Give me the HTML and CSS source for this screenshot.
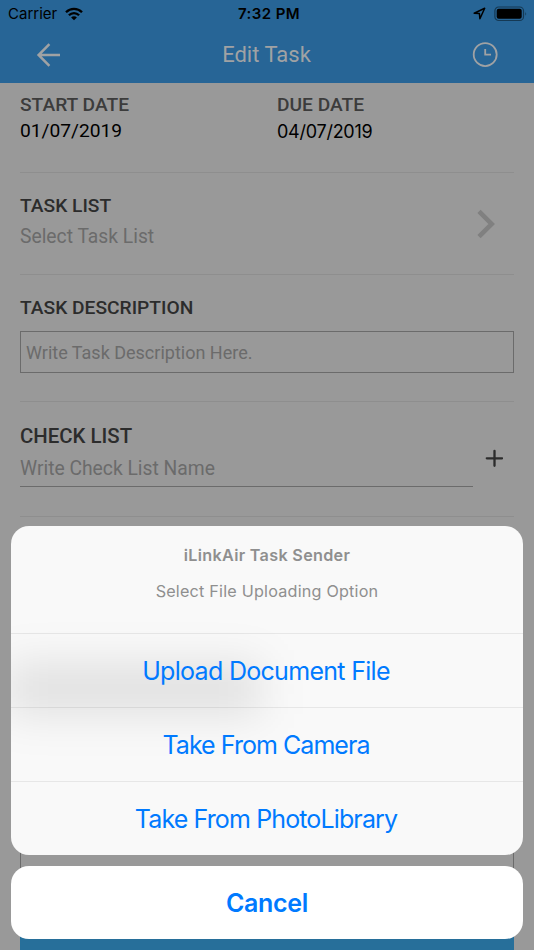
FILE: index.html
```html
<!DOCTYPE html>
<html lang="en">
<head>
    <meta charset="UTF-8">
    <meta name="viewport" content="width=device-width, initial-scale=1.0">
    <title>Edit Task</title>
    <link rel="stylesheet" href="styles.css">
</head>
<body>
    <div class="screen">
        <header class="header">
            <div class="status-bar">
                <div class="status-left">
                    <span class="carrier">Carrier</span>
                    <svg class="wifi" width="18" height="14" viewBox="0 0 18 14" fill="none" stroke="#000" stroke-width="2.3">
                        <path d="M1 5.2C5.5 .7 12.5 .7 17 5.2"/>
                        <path d="M3.9 8.3C6.8 5.4 11.2 5.4 14.1 8.3"/>
                        <path d="M9 13.3L6.1 10.4C7.6 8.9 10.4 8.9 11.9 10.4Z" fill="#000" stroke="none"/>
                    </svg>
                </div>
                <span class="time">7:32 PM</span>
                <div class="status-right">
                    <svg width="13" height="13" viewBox="0 0 13 13" fill="none" stroke="#000" stroke-width="1.5" stroke-linejoin="round">
                        <path d="M1.2 6.2L11.7 1.2L6.9 11.7L6.4 6.6Z"/>
                    </svg>
                    <svg width="34" height="16" viewBox="0 0 34 16">
                        <rect x=".9" y="1" width="28.6" height="13.5" rx="3.8" fill="none" stroke="#153954" stroke-width="1.2"/>
                        <rect x="2.7" y="2.8" width="25" height="9.9" rx="2" fill="#000"/>
                        <path d="M31.3 5.7Q33 7.7 31.3 9.8Z" fill="#153954"/>
                    </svg>
                </div>
            </div>
            <div class="nav">
                <svg width="26" height="26" viewBox="0 0 26 26" fill="none" stroke="#a0a2a4" stroke-width="2.5">
                    <path d="M14.4 2.2L3.6 13L14.4 23.8M4 13H25"/>
                </svg>
                <h1 class="nav-title">Edit Task</h1>
                <svg width="26" height="26" viewBox="0 0 26 26" fill="none" stroke="#a0a2a4" stroke-width="1.8">
                    <circle cx="13.2" cy="12.6" r="11.5"/>
                    <path d="M13.2 7V12.6H19"/>
                </svg>
            </div>
        </header>

        <main class="form">
            <section class="section dates">
                <div class="date">
                    <h2 class="label label-light">START DATE</h2>
                    <p class="value">01/07/2019</p>
                </div>
                <div class="date">
                    <h2 class="label label-light">DUE DATE</h2>
                    <p class="value value-due">04/07/2019</p>
                </div>
            </section>
            <section class="section task-list">
                <div>
                    <h2 class="label">TASK LIST</h2>
                    <p class="placeholder">Select Task List</p>
                </div>
                <svg class="chevron" width="20" height="30" viewBox="0 0 20 30" fill="none" stroke="#808080" stroke-width="4.6">
                    <path d="M2 2.4L14.7 15L2 27.6"/>
                </svg>
            </section>
            <section class="section description">
                <h2 class="label">TASK DESCRIPTION</h2>
                <div class="text-box">Write Task Description Here.</div>
            </section>
            <section class="section check-list">
                <div class="check-field">
                    <h2 class="label check-label">CHECK LIST</h2>
                    <p class="placeholder">Write Check List Name</p>
                </div>
                <svg class="plus" width="18" height="18" viewBox="0 0 18 18" stroke="#2c2c2c" stroke-width="2.3" stroke-linecap="round">
                    <path d="M9.5 1.8V16.8M1.8 9.3H17"/>
                </svg>
            </section>
            <div class="comments"></div>
            <div class="save-bar"></div>
        </main>

        <div class="sheet">
            <div class="options">
                <div class="sheet-head">
                    <p class="sheet-title">iLinkAir Task Sender</p>
                    <p class="sheet-message">Select File Uploading Option</p>
                </div>
                <div class="option option-upload">Upload Document File</div>
                <div class="option option-camera">Take From Camera</div>
                <div class="option option-photo">Take From PhotoLibrary</div>
            </div>
            <div class="cancel">Cancel</div>
        </div>
    </div>
</body>
</html>
```
FILE: styles.css
```css
* {
    box-sizing: border-box;
}

body {
    margin: 0;
    background-color: #999;
    font-family: Roboto, sans-serif;
}

h1, h2, p {
    margin: 0;
    font-weight: normal;
}

svg {
    display: block;
}

.screen {
    position: relative;
    display: flex;
    flex-direction: column;
    width: 534px;
    height: 950px;
    overflow: hidden;
}

.header {
    height: 83px;
    background-color: #276596;
}

.status-bar {
    display: grid;
    grid-template-columns: 1fr auto 1fr;
    align-items: center;
    height: 27px;
    padding: 0 6px 0 8px;
    font-family: Inter, sans-serif;
    font-size: 15px;
    color: #000;
}

.status-left, .status-right {
    display: flex;
    align-items: center;
    gap: 8px;
}

.status-right {
    justify-content: flex-end;
}

.time {
    padding-left: 2px;
    font-weight: 600;
    letter-spacing: 0.4px;
}

.nav {
    display: flex;
    align-items: center;
    justify-content: space-between;
    height: 55px;
    padding: 0 36px 0 35px;
}

.nav-title {
    font-size: 22px;
    color: #a0a2a4;
}

.form {
    flex: 1;
    display: flex;
    flex-direction: column;
    padding: 0 20px;
}

.section {
    border-bottom: 1px solid #8e8e8e;
}

.label {
    font-size: 19.2px;
    font-weight: 500;
    line-height: 24px;
    color: #2c2c2c;
}

.label-light {
    color: #3c3c3c;
}

.value {
    font-size: 19.2px;
    line-height: 28px;
    color: #000;
}

.value-due {
    font-family: Inter, sans-serif;
    font-size: 18px;
    line-height: 30px;
    letter-spacing: -0.25px;
}

.placeholder {
    font-size: 19.3px;
    line-height: 24px;
    color: #6b6b6b;
}

.dates {
    display: grid;
    grid-template-columns: 257px 1fr;
    height: 90px;
    padding-top: 10px;
}

.task-list {
    display: flex;
    justify-content: space-between;
    height: 102px;
    padding: 21px 17px 0 0;
}

.task-list .placeholder {
    margin-top: 7px;
}

.chevron {
    margin-top: 15px;
}

.description {
    height: 127px;
    padding-top: 21px;
}

.text-box {
    height: 42px;
    margin-top: 11px;
    padding-left: 5px;
    border: 1px solid #6b6b6b;
    font-size: 18px;
    line-height: 41px;
    color: #6b6b6b;
}

.check-list {
    display: flex;
    justify-content: space-between;
    height: 115px;
    padding: 22px 11px 0 0;
}

.check-field {
    width: 453px;
    height: 63px;
    border-bottom: 1px solid #6b6b6b;
}

.check-label {
    font-size: 20.4px;
}

.check-field .placeholder {
    margin-top: 9px;
}

.plus {
    margin-top: 25px;
}

.comments {
    flex: 1;
    margin-top: 240px;
    border: 1px solid #6b6b6b;
}

.save-bar {
    height: 40px;
    margin-top: 20px;
    background-color: #276f9a;
}

/* action sheet */
.sheet {
    position: absolute;
    left: 11px;
    right: 11px;
    bottom: 11px;
    display: flex;
    flex-direction: column;
    gap: 11px;
    font-family: Inter, sans-serif;
    text-align: center;
    color: #007aff;
}

.options {
    position: relative;
    overflow: hidden;
    border-radius: 18px;
    background-color: #f9f9f9;
}

.options::before {
    content: "";
    position: absolute;
    left: -5px;
    top: 138px;
    width: 255px;
    height: 50px;
    background-color: rgba(0, 0, 0, 0.1);
    filter: blur(22px);
}

.sheet-head {
    height: 107px;
    padding-top: 18px;
    color: #8f8f8f;
}

.sheet-title {
    font-size: 16.2px;
    font-weight: 600;
    line-height: 22px;
    letter-spacing: 0.3px;
}

.sheet-message {
    margin-top: 14px;
    font-size: 16.2px;
    line-height: 22px;
    letter-spacing: 0.2px;
}

.option {
    position: relative;
    height: 74px;
    padding-right: 2px;
    border-top: 1px solid rgba(0, 0, 0, 0.07);
    font-size: 25px;
    line-height: 75px;
}

.option-upload {
    letter-spacing: -0.7px;
}

.option-camera {
    letter-spacing: -0.95px;
}

.option-photo {
    letter-spacing: -0.87px;
}

.cancel {
    height: 73px;
    border-radius: 18px;
    background-color: #fff;
    font-size: 25px;
    font-weight: 600;
    line-height: 75px;
    letter-spacing: -0.3px;
}
```
